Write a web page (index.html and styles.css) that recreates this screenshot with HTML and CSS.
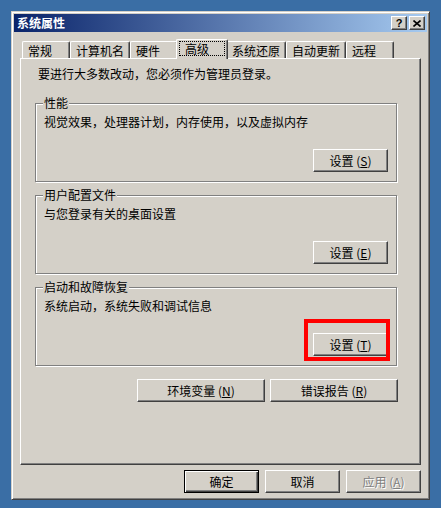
FILE: index.html
```html
<!DOCTYPE html>
<html lang="zh-CN">
<head>
  <meta charset="UTF-8" />
  <title>系统属性</title>
  <link rel="stylesheet" href="styles.css">
</head>
<body>

  <div class="window">
    <!-- Title bar -->
    <div class="titlebar">
      <span class="title">系统属性</span>
      <div class="caption-buttons">
        <button class="cap-btn help">?</button>
        <button class="cap-btn">
          <svg width="8" height="7" viewBox="0 0 8 7">
            <path d="M0.5 0.5 L7.5 6.5 M7.5 0.5 L0.5 6.5" stroke="#000" stroke-width="1.6" fill="none" />
          </svg>
        </button>
      </div>
    </div>

    <div class="window-body">
      <!-- Tabs -->
      <div class="tabs">
        <div class="tab">常规</div>
        <div class="tab">计算机名</div>
        <div class="tab">硬件</div>
        <div class="tab active"><span class="focus">高级</span></div>
        <div class="tab">系统还原</div>
        <div class="tab">自动更新</div>
        <div class="tab">远程</div>
      </div>

      <div class="panel">
        <p class="intro">要进行大多数改动，您必须作为管理员登录。</p>

        <fieldset class="group">
          <legend>性能</legend>
          <p class="desc">视觉效果，处理器计划，内存使用，以及虚拟内存</p>
          <div class="group-actions">
            <button class="btn">设置 (<u>S</u>)</button>
          </div>
        </fieldset>

        <fieldset class="group">
          <legend>用户配置文件</legend>
          <p class="desc">与您登录有关的桌面设置</p>
          <div class="group-actions">
            <button class="btn">设置 (<u>E</u>)</button>
          </div>
        </fieldset>

        <fieldset class="group">
          <legend>启动和故障恢复</legend>
          <p class="desc">系统启动，系统失败和调试信息</p>
          <div class="group-actions">
            <span class="mark"><button class="btn">设置 (<u>T</u>)</button></span>
          </div>
        </fieldset>

        <div class="panel-actions">
          <button class="btn wide">环境变量 (<u>N</u>)</button>
          <button class="btn wide">错误报告 (<u>R</u>)</button>
        </div>
      </div>

      <!-- Dialog buttons -->
      <div class="dialog-actions">
        <button class="btn default">确定</button>
        <button class="btn">取消</button>
        <button class="btn" disabled>应用 (<u>A</u>)</button>
      </div>
    </div>
  </div>

</body>
</html>
```

FILE: styles.css
```css
body {
  margin: 0;
  padding: 11px;
  background: #3a6ea5;
  font-family: "Noto Sans CJK SC", sans-serif;
  font-size: 12px;
  line-height: 14px;
  color: #000;
}
.window {
  width: 419px;
  height: 489px;
  box-sizing: border-box;
  background: #d4d0c8;
  border: 1px solid;
  border-color: #d4d0c8 #404040 #404040 #d4d0c8;
  box-shadow: inset 1px 1px #fff, inset -1px -1px #808080;
  padding: 2px;
}
.titlebar {
  height: 18px;
  display: flex;
  align-items: center;
  padding-left: 3px;
  background: linear-gradient(to right, #0a246a, #a6caf0);
  color: #fff;
}
.title {
  flex: 1;
  font-weight: bold;
}
.caption-buttons {
  display: flex;
  gap: 2px;
  margin-right: 2px;
}
.cap-btn {
  width: 16px;
  height: 14px;
  box-sizing: border-box;
  padding: 0;
  display: flex;
  align-items: center;
  justify-content: center;
  background: #d4d0c8;
  border: 1px solid;
  border-color: #fff #404040 #404040 #fff;
  box-shadow: inset -1px -1px #808080;
}
.cap-btn.help {
  font-family: "Liberation Sans", sans-serif;
  font-weight: bold;
  font-size: 11px;
  line-height: 11px;
  color: #000;
}
.window-body {
  padding: 7px 6px 0;
}
.tabs {
  display: flex;
  align-items: flex-end;
  height: 19px;
  padding-left: 2px;
}
.tab {
  height: 17px;
  min-width: 48px;
  box-sizing: border-box;
  padding: 1px 5px 0;
  line-height: 15px;
  border-left: 1px solid #fff;
  border-top: 1px solid #fff;
  border-right: 1px solid #404040;
  border-radius: 2px 2px 0 0;
  box-shadow: inset -1px 0 #808080;
}
.tab.active {
  position: relative;
  z-index: 1;
  display: flex;
  height: 20px;
  min-width: 52px;
  margin: 0 -2px -1px;
  padding: 1px 2px 3px;
  background: #d4d0c8;
}
.focus {
  flex: 1;
  border: 1px dotted #000;
  padding-left: 5px;
  line-height: 13px;
}
.panel {
  height: 407px;
  box-sizing: border-box;
  border: 1px solid;
  border-color: #fff #404040 #404040 #fff;
  box-shadow: inset -1px -1px #808080;
  padding: 8px 0 0 14px;
}
.intro {
  margin: 0;
  padding-left: 3px;
}
.group {
  width: 362px;
  min-width: 0;
  box-sizing: border-box;
  margin: 6px 0 0;
  padding: 0 8px 9px;
  border: 1px solid #808080;
  box-shadow: inset 1px 1px #fff, 1px 1px #fff;
}
.intro + .group {
  margin-top: 15px;
}
.group legend {
  padding: 0 1px;
  margin-left: -1px;
  line-height: 14px;
  background: #d4d0c8;
}
.desc {
  margin: 5px 0 0;
}
.group-actions {
  display: flex;
  justify-content: flex-end;
  margin-top: 20px;
}
.mark {
  position: relative;
  display: flex;
}
.mark::after {
  content: "";
  position: absolute;
  left: -9px;
  top: -14px;
  right: -2px;
  bottom: -5px;
  border: 4px solid #f00;
}
.panel-actions {
  width: 363px;
  display: flex;
  justify-content: flex-end;
  gap: 5px;
  margin-top: 13px;
}
.btn {
  width: 75px;
  height: 23px;
  box-sizing: border-box;
  padding: 0;
  font: inherit;
  color: #000;
  background: #d4d0c8;
  border: 1px solid;
  border-color: #fff #404040 #404040 #fff;
  box-shadow: inset -1px -1px #808080;
}
.btn.wide {
  width: 128px;
}
.btn.default {
  border-color: #000;
  box-shadow: inset 1px 1px #fff, inset -1px -1px #404040, inset -2px -2px #808080;
}
.btn:disabled {
  color: #808080;
  text-shadow: 1px 1px #fff;
}
.dialog-actions {
  display: flex;
  justify-content: flex-end;
  gap: 6px;
  margin-top: 5px;
}
```
